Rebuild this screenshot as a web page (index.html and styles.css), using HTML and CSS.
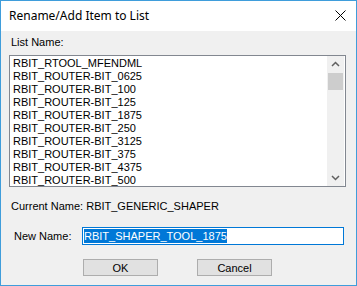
FILE: index.html
```html
<!DOCTYPE html>
<html>
<head>
    <title>Rename/Add Item to List</title>
    <link rel="stylesheet" href="styles.css">
</head>
<body>
    <!-- Dialog window -->
    <div class="window">
        <div class="titlebar">
            <span class="title">Rename/Add Item to List</span>
            <svg class="close" width="11" height="11" viewBox="0 0 11 11">
                <path d="M0.5 0.5 L10.5 10.5 M10.5 0.5 L0.5 10.5" stroke="#000" stroke-width="1" fill="none"/>
            </svg>
        </div>

        <div class="content">
            <div class="label list-label">List Name:</div>

            <!-- List box with scrollbar -->
            <div class="listbox">
                <ul class="items">
                    <li>RBIT_RTOOL_MFENDML</li>
                    <li>RBIT_ROUTER-BIT_0625</li>
                    <li>RBIT_ROUTER-BIT_100</li>
                    <li>RBIT_ROUTER-BIT_125</li>
                    <li>RBIT_ROUTER-BIT_1875</li>
                    <li>RBIT_ROUTER-BIT_250</li>
                    <li>RBIT_ROUTER-BIT_3125</li>
                    <li>RBIT_ROUTER-BIT_375</li>
                    <li>RBIT_ROUTER-BIT_4375</li>
                    <li>RBIT_ROUTER-BIT_500</li>
                </ul>
                <div class="scrollbar">
                    <svg class="arrow" width="17" height="17" viewBox="0 0 17 17">
                        <path d="M5 10 L8.5 6.5 L12 10" stroke="#606060" stroke-width="1.5" fill="none"/>
                    </svg>
                    <div class="thumb"></div>
                    <div class="track"></div>
                    <svg class="arrow" width="17" height="17" viewBox="0 0 17 17">
                        <path d="M5 7 L8.5 10.5 L12 7" stroke="#606060" stroke-width="1.5" fill="none"/>
                    </svg>
                </div>
            </div>

            <div class="label current">Current Name: RBIT_GENERIC_SHAPER</div>

            <!-- New name input -->
            <div class="name-row">
                <span class="label">New Name:</span>
                <div class="textbox"><span class="selected">RBIT_SHAPER_TOOL_1875</span></div>
            </div>

            <div class="buttons">
                <button class="btn">OK</button>
                <button class="btn">Cancel</button>
            </div>
        </div>
    </div>
</body>
</html>
```

FILE: styles.css
```css
/* Page reset */
body {
    margin: 0;
    background: #f0f0f0;
}
/* Outer dialog frame */
.window {
    width: 357px;
    height: 286px;
    box-sizing: border-box;
    border: 1px solid #3f9ddb;
    background: #f0f0f0;
    font-family: "Liberation Sans", Arial, sans-serif;
    font-size: 11px;
    color: #000;
}
/* Title bar */
.titlebar {
    height: 30px;
    background: #fff;
    display: flex;
    align-items: center;
    justify-content: space-between;
    padding: 0 10px 0 8px;
}
.title {
    font-family: "Noto Sans", sans-serif;
    font-size: 12px;
    padding-bottom: 1px;
}
.close {
    margin-top: -1px;
}
/* Dialog body */
.content {
    padding: 5px 10px 0 8px;
}
.label {
    line-height: 13px;
    height: 13px;
}
.list-label {
    padding-left: 2px;
}
/* List box */
.listbox {
    margin-top: 6px;
    width: 337px;
    height: 132px;
    box-sizing: border-box;
    border: 1px solid #828790;
    background: #fff;
    display: flex;
}
.items {
    flex: 1;
    list-style: none;
    margin: 0;
    padding: 1px 0 0 3px;
}
.items li {
    height: 13px;
    line-height: 13px;
}
.scrollbar {
    width: 17px;
    background: #f0f0f0;
    display: flex;
    flex-direction: column;
    margin-right: 1px;
}
.thumb {
    height: 17px;
    margin: 0 1px;
    background: #cdcdcd;
}
.track {
    flex: 1;
}
/* Current name line */
.current {
    margin-top: 13px;
    padding-left: 2px;
}
/* New name row */
.name-row {
    display: flex;
    align-items: center;
    margin-top: 14px;
    padding-left: 5px;
}
.name-row .label {
    width: 68px;
}
.textbox {
    width: 262px;
    height: 18px;
    box-sizing: border-box;
    border: 1px solid #0078d7;
    background: #fff;
    padding: 1px 0 0 1px;
    line-height: 14px;
}
.selected {
    background: #0078d7;
    color: #fff;
    display: inline-block;
    height: 14px;
}
/* Buttons */
.buttons {
    display: flex;
    gap: 39px;
    margin-top: 14px;
    padding-left: 74px;
}
.btn {
    width: 75px;
    height: 17px;
    padding: 0;
    border: 1px solid #adadad;
    background: #e1e1e1;
    font-family: "Liberation Sans", Arial, sans-serif;
    font-size: 11px;
    line-height: 14px;
    color: #000;
}
```
